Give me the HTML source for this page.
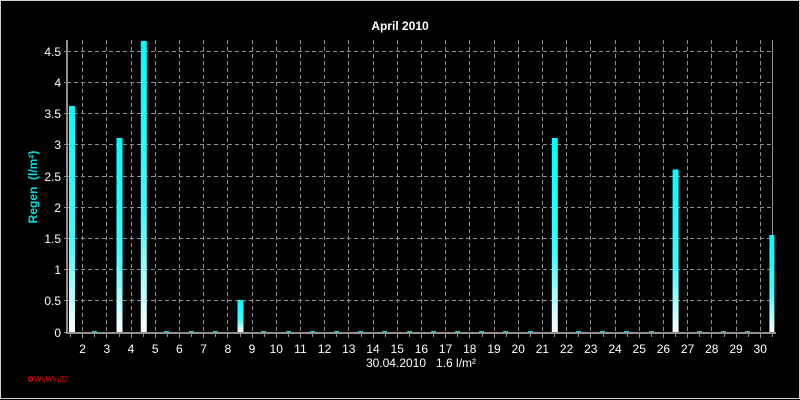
<!DOCTYPE html><html><head><style>body{margin:0;background:#000}svg{display:block}</style></head><body>
<svg width="800" height="400" xmlns="http://www.w3.org/2000/svg" font-family="Liberation Sans, sans-serif">
<defs><linearGradient id="g" x1="0" y1="0" x2="0" y2="1"><stop offset="0" stop-color="#00ffff"/><stop offset="0.6" stop-color="#40ffff"/><stop offset="1" stop-color="#ffffff"/></linearGradient></defs>
<rect x="0" y="0" width="800" height="400" fill="#000"/>
<rect x="0.5" y="0.5" width="799" height="398" fill="none" stroke="#d0d0d0" stroke-width="1"/>
<text x="400" y="30" fill="#fff" font-size="12" font-weight="bold" text-anchor="middle">April 2010</text>
<g stroke="#909090" stroke-width="1" stroke-dasharray="4,3">
<path d="M67 51.5H772M67 82.5H772M67 113.5H772M67 144.5H772M67 176.5H772M67 207.5H772M67 238.5H772M67 269.5H772M67 300.5H772"/>
<path d="M82.5 40V332M106.5 40V332M131.5 40V332M155.5 40V332M179.5 40V332M203.5 40V332M227.5 40V332M252.5 40V332M276.5 40V332M300.5 40V332M324.5 40V332M348.5 40V332M373.5 40V332M397.5 40V332M421.5 40V332M445.5 40V332M469.5 40V332M494.5 40V332M518.5 40V332M542.5 40V332M566.5 40V332M590.5 40V332M615.5 40V332M639.5 40V332M663.5 40V332M687.5 40V332M711.5 40V332M736.5 40V332M760.5 40V332"/>
</g>
<line x1="772.5" y1="40" x2="772.5" y2="333" stroke="#909090"/>
<g fill="url(#g)">
<rect x="69" y="106" width="6" height="226"/>
<rect x="116.5" y="138" width="6" height="194"/>
<rect x="140.8" y="41" width="6" height="291"/>
<rect x="237.5" y="300" width="6" height="32"/>
<rect x="551.8" y="138" width="6" height="194"/>
<rect x="672.6" y="169.5" width="6" height="162.5"/>
<rect x="769.4" y="235" width="5" height="97"/>
</g>
<g fill="#00e0e0">
<rect x="92" y="331" width="5" height="2"/><rect x="164" y="331" width="5" height="2"/><rect x="189" y="331" width="5" height="2"/><rect x="213" y="331" width="5" height="2"/><rect x="261" y="331" width="5" height="2"/><rect x="286" y="331" width="5" height="2"/><rect x="310" y="331" width="5" height="2"/><rect x="334" y="331" width="5" height="2"/><rect x="358" y="331" width="5" height="2"/><rect x="382" y="331" width="5" height="2"/><rect x="407" y="331" width="5" height="2"/><rect x="431" y="331" width="5" height="2"/><rect x="455" y="331" width="5" height="2"/><rect x="479" y="331" width="5" height="2"/><rect x="503" y="331" width="5" height="2"/><rect x="528" y="331" width="5" height="2"/><rect x="576" y="331" width="5" height="2"/><rect x="600" y="331" width="5" height="2"/><rect x="624" y="331" width="5" height="2"/><rect x="649" y="331" width="5" height="2"/><rect x="697" y="331" width="5" height="2"/><rect x="721" y="331" width="5" height="2"/><rect x="745" y="331" width="5" height="2"/>
</g>
<rect x="66" y="40" width="2" height="294" fill="#909090"/>
<rect x="66" y="332" width="710" height="2" fill="#909090"/>
<g stroke="#909090" stroke-width="1">
<path d="M64 51.5H66M64 82.5H66M64 113.5H66M64 144.5H66M64 176.5H66M64 207.5H66M64 238.5H66M64 269.5H66M64 300.5H66M64 332.5H66"/>
<path d="M70.5 334V337M82.5 334V338M94.5 334V337M106.5 334V338M119.5 334V337M131.5 334V338M143.5 334V337M155.5 334V338M167.5 334V337M179.5 334V338M191.5 334V337M203.5 334V338M215.5 334V337M227.5 334V338M240.5 334V337M252.5 334V338M264.5 334V337M276.5 334V338M288.5 334V337M300.5 334V338M312.5 334V337M324.5 334V338M336.5 334V337M348.5 334V338M361.5 334V337M373.5 334V338M385.5 334V337M397.5 334V338M409.5 334V337M421.5 334V338M433.5 334V337M445.5 334V338M457.5 334V337M469.5 334V338M482.5 334V337M494.5 334V338M506.5 334V337M518.5 334V338M530.5 334V337M542.5 334V338M554.5 334V337M566.5 334V338M578.5 334V337M590.5 334V338M603.5 334V337M615.5 334V338M627.5 334V337M639.5 334V338M651.5 334V337M663.5 334V338M675.5 334V337M687.5 334V338M699.5 334V337M711.5 334V338M724.5 334V337M736.5 334V338M748.5 334V337M760.5 334V338M772.5 334V337"/>
</g>
<g fill="#fff" font-size="12" text-anchor="end">
<text x="61" y="56">4.5</text><text x="61" y="87">4</text><text x="61" y="118">3.5</text><text x="61" y="149">3</text><text x="61" y="181">2.5</text><text x="61" y="212">2</text><text x="61" y="243">1.5</text><text x="61" y="274">1</text><text x="61" y="305">0.5</text><text x="61" y="337">0</text>
</g>
<g fill="#fff" font-size="12" text-anchor="middle">
<text x="82.6" y="353">2</text><text x="106.8" y="353">3</text><text x="131" y="353">4</text><text x="155.2" y="353">5</text><text x="179.4" y="353">6</text><text x="203.6" y="353">7</text><text x="227.8" y="353">8</text><text x="252" y="353">9</text><text x="276.2" y="353">10</text><text x="300.4" y="353">11</text><text x="324.6" y="353">12</text><text x="348.8" y="353">13</text><text x="373" y="353">14</text><text x="397.2" y="353">15</text><text x="421.4" y="353">16</text><text x="445.6" y="353">17</text><text x="469.8" y="353">18</text><text x="494" y="353">19</text><text x="518.2" y="353">20</text><text x="542.4" y="353">21</text><text x="566.6" y="353">22</text><text x="590.8" y="353">23</text><text x="615" y="353">24</text><text x="639.2" y="353">25</text><text x="663.4" y="353">26</text><text x="687.6" y="353">27</text><text x="711.8" y="353">28</text><text x="736" y="353">29</text><text x="760.2" y="353">30</text>
<text x="421" y="367" xml:space="preserve">30.04.2010   1.6 l/m²</text>
</g>
<text transform="translate(37,187) rotate(-90)" fill="#00e0e0" font-size="12" font-weight="bold" text-anchor="middle" xml:space="preserve">Regen  (l/m²)</text>
<circle cx="30.5" cy="379" r="2" fill="none" stroke="#e00000" stroke-width="1.5"/>
<text x="34" y="382" fill="#e00000" font-size="8">WsWin32</text>
</svg>
</body></html>
